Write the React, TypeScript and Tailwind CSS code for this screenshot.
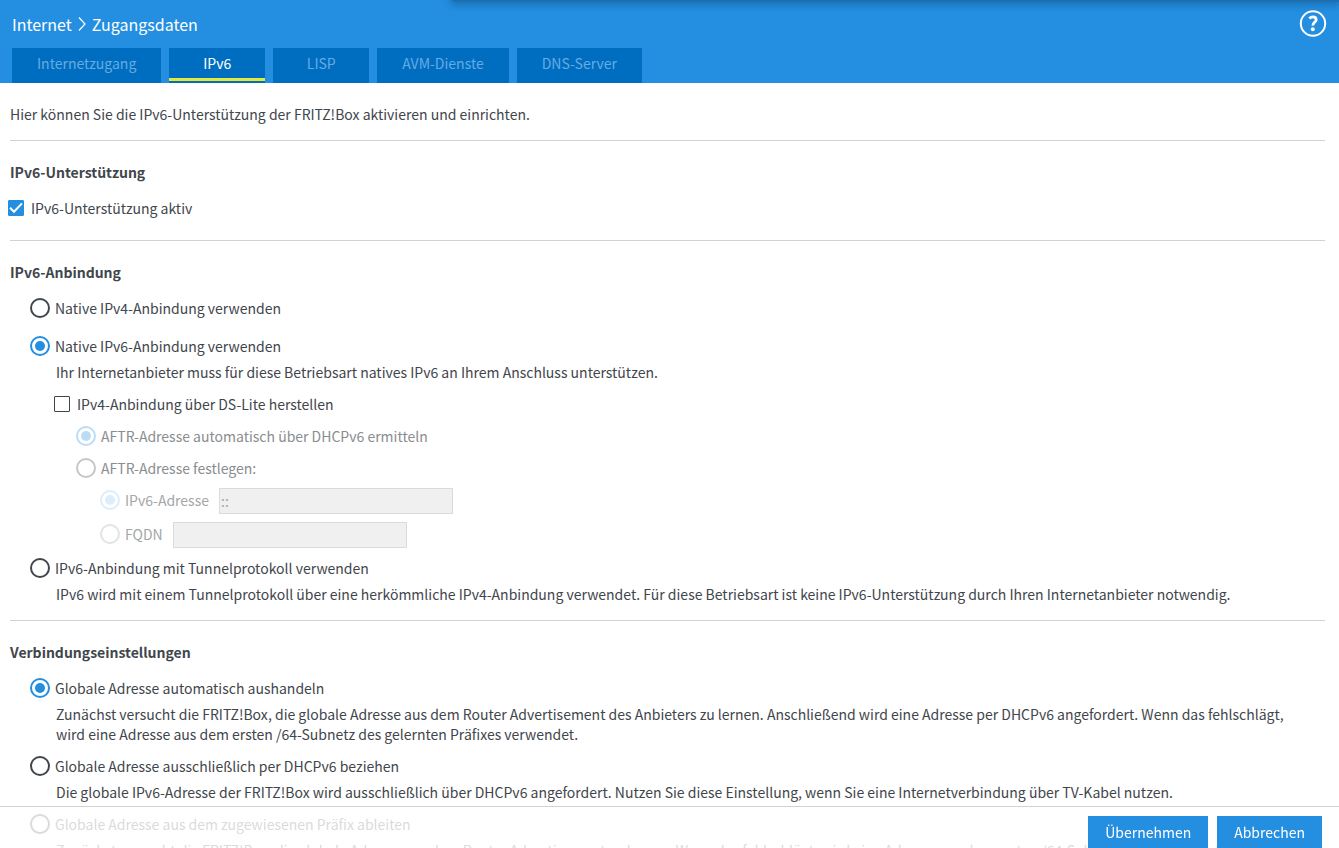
import { useState } from "react";
import type { ReactNode } from "react";

const TABS = ["Internetzugang", "IPv6", "LISP", "AVM-Dienste", "DNS-Server"];

type RadioProps = {
  name: string;
  label: string;
  checked: boolean;
  onSelect?: () => void;
  disabled?: boolean;
  faint?: boolean;
};

function Radio({ name, label, checked, onSelect, disabled, faint }: RadioProps) {
  const ring = checked ? "border-[#248ee0]" : "border-[#3f464c]";
  const fade = faint ? "opacity-15" : disabled ? "opacity-30" : "";
  const text = faint ? "text-[#a4a6a8]" : disabled ? "text-[#8a8d90]" : "";
  return (
    <label className="flex h-5 items-center gap-[5px]">
      <span className={`grid size-5 shrink-0 place-items-center ${fade}`}>
        <input
          type="radio"
          name={name}
          checked={checked}
          disabled={disabled}
          onChange={onSelect}
          className={`col-start-1 row-start-1 size-5 appearance-none rounded-full border-2 bg-white ${ring}`}
        />
        {checked && (
          <span className="pointer-events-none col-start-1 row-start-1 size-2.5 rounded-full bg-[#248ee0]" />
        )}
      </span>
      <span className={text}>{label}</span>
    </label>
  );
}

type CheckProps = { label: string; checked: boolean; onToggle: () => void };

function Checkbox({ label, checked, onToggle }: CheckProps) {
  const box = checked ? "border-[#248ee0] bg-[#248ee0]" : "border-[#3f464c] bg-white";
  return (
    <label className="flex h-5 items-center gap-[7px]">
      <span className="grid size-4 shrink-0 place-items-center">
        <input
          type="checkbox"
          checked={checked}
          onChange={onToggle}
          className={`col-start-1 row-start-1 size-4 appearance-none rounded-[1px] border ${box}`}
        />
        {checked && (
          <svg viewBox="0 0 16 16" className="pointer-events-none col-start-1 row-start-1 size-4" aria-hidden="true">
            <path d="M2 7.8 6 11.8 14 3.4" fill="none" stroke="#fff" strokeWidth="2" />
          </svg>
        )}
      </span>
      <span>{label}</span>
    </label>
  );
}

function Hint({ children }: { children: ReactNode }) {
  return <p className="mt-1.5 pr-3 pl-[26px]">{children}</p>;
}

function Section({ title, children }: { title: string; children: ReactNode }) {
  return (
    <section className="border-t border-[#d0d2d3] pt-[21px]">
      <h2 className="mb-4 font-bold">{title}</h2>
      {children}
    </section>
  );
}

export default function App() {
  const [tab, setTab] = useState("IPv6");
  const [active, setActive] = useState(true);
  const [dsLite, setDsLite] = useState(false);
  const [mode, setMode] = useState("native6");
  const [address, setAddress] = useState("auto");

  return (
    <div className="flex h-screen flex-col overflow-hidden bg-white font-['Noto_Sans_CJK_SC','Noto_Sans',sans-serif] text-[14px] leading-5 text-[#3f464c]">
      <header className="relative shrink-0 bg-[#248ee0] px-3 pt-2.5 text-white">
        <div className="absolute inset-x-0 top-0 h-3 overflow-hidden">
          <div className="-mt-2 ml-[453px] h-2.5 bg-[#1d6fb0] shadow-[0_0_8px_2px_rgba(0,40,80,0.35)]" />
        </div>
        <div className="flex items-start justify-between">
          <nav className="flex h-[38px] items-center gap-1.5 pb-2.5 text-[16px]" aria-label="Pfad">
            <a href="#internet">Internet</a>
            <svg viewBox="0 0 8 14" className="h-3.5 w-2" aria-hidden="true">
              <path d="M1 .5 7 7 1 13.5" fill="none" stroke="#fff" strokeWidth="1.2" />
            </svg>
            <a href="#zugangsdaten">Zugangsdaten</a>
          </nav>
          <button type="button" aria-label="Hilfe" className="size-7">
            <svg viewBox="0 0 28 28" className="size-7" aria-hidden="true">
              <circle cx="14" cy="13.5" r="12.2" fill="none" stroke="#fff" strokeWidth="2" />
              <path d="M10.4 8.6c.9-1.2 2-1.8 3.4-1.8 2.1 0 3.4 1.1 3.4 2.9 0 2.5-3.5 2.8-3.4 5.9" fill="none" stroke="#fff" strokeWidth="2.8" />
              <circle cx="13.8" cy="19.3" r="2" fill="#fff" />
            </svg>
          </button>
        </div>
        <nav className="flex gap-2" aria-label="Seiten">
          {TABS.map((name) => (
            <button
              key={name}
              type="button"
              onClick={() => setTab(name)}
              className={`flex h-[35px] min-w-24 flex-col items-center bg-[#006ec0] ${
                name === tab ? "text-white" : "text-[#66abe2]"
              }`}
            >
              <span className="flex h-[30px] items-center px-[25px]">{name}</span>
              {name === tab && <span className="h-[3px] w-full bg-[#e2e83c]" />}
            </button>
          ))}
        </nav>
      </header>

      <main className="min-h-0 flex-1 overflow-y-auto pr-3.5 pl-2.5 [scrollbar-width:none]">
        <p className="pt-[21px] pb-4">
          Hier können Sie die IPv6-Unterstützung der FRITZ!Box aktivieren und einrichten.
        </p>

        <Section title="IPv6-Unterstützung">
          <div className="-ml-0.5 pb-[22px]">
            <Checkbox label="IPv6-Unterstützung aktiv" checked={active} onToggle={() => setActive(!active)} />
          </div>
        </Section>

        <Section title="IPv6-Anbindung">
          <div className="pb-4 pl-5">
            <Radio name="mode" label="Native IPv4-Anbindung verwenden" checked={mode === "native4"} onSelect={() => setMode("native4")} />
            <div className="mt-[18px]">
              <Radio name="mode" label="Native IPv6-Anbindung verwenden" checked={mode === "native6"} onSelect={() => setMode("native6")} />
            </div>
            <Hint>Ihr Internetanbieter muss für diese Betriebsart natives IPv6 an Ihrem Anschluss unterstützen.</Hint>
            <div className="mt-3 flex flex-col gap-3 pl-6">
              <Checkbox label="IPv4-Anbindung über DS-Lite herstellen" checked={dsLite} onToggle={() => setDsLite(!dsLite)} />
              <div className="flex flex-col gap-3 pl-[22px]">
                <Radio name="aftr" label="AFTR-Adresse automatisch über DHCPv6 ermitteln" checked disabled />
                <Radio name="aftr" label="AFTR-Adresse festlegen:" checked={false} disabled />
              </div>
            </div>
            <div className="mt-2.5 flex flex-col gap-2 pl-[70px]">
              <div className="flex items-start gap-2.5">
                <div className="pt-0.5">
                  <Radio name="aftr-type" label="IPv6-Adresse" checked disabled faint />
                </div>
                <input
                  type="text"
                  aria-label="IPv6-Adresse"
                  disabled
                  defaultValue="::"
                  className="h-[26px] w-[234px] border border-[#d9dbdc] bg-[#f0f0f0] px-px text-[#a4a6a8]"
                />
              </div>
              <div className="flex items-start gap-2.5">
                <div className="pt-0.5">
                  <Radio name="aftr-type" label="FQDN" checked={false} disabled faint />
                </div>
                <input
                  type="text"
                  aria-label="FQDN"
                  disabled
                  className="h-[26px] w-[234px] border border-[#d9dbdc] bg-[#f0f0f0] px-px"
                />
              </div>
            </div>
            <div className="mt-2.5">
              <Radio name="mode" label="IPv6-Anbindung mit Tunnelprotokoll verwenden" checked={mode === "tunnel"} onSelect={() => setMode("tunnel")} />
            </div>
            <Hint>
              IPv6 wird mit einem Tunnelprotokoll über eine herkömmliche IPv4-Anbindung verwendet. Für diese Betriebsart ist keine IPv6-Unterstützung durch Ihren Internetanbieter notwendig.
            </Hint>
          </div>
        </Section>

        <Section title="Verbindungseinstellungen">
          <div className="flex flex-col gap-3 pb-14 pl-5">
            <div>
              <Radio name="address" label="Globale Adresse automatisch aushandeln" checked={address === "auto"} onSelect={() => setAddress("auto")} />
              <Hint>
                Zunächst versucht die FRITZ!Box, die globale Adresse aus dem Router Advertisement des Anbieters zu lernen. Anschließend wird eine Adresse per DHCPv6 angefordert. Wenn das fehlschlägt, wird eine Adresse aus dem ersten /64-Subnetz des gelernten Präfixes verwendet.
              </Hint>
            </div>
            <div>
              <Radio name="address" label="Globale Adresse ausschließlich per DHCPv6 beziehen" checked={address === "dhcp"} onSelect={() => setAddress("dhcp")} />
              <Hint>
                Die globale IPv6-Adresse der FRITZ!Box wird ausschließlich über DHCPv6 angefordert. Nutzen Sie diese Einstellung, wenn Sie eine Internetverbindung über TV-Kabel nutzen.
              </Hint>
            </div>
            <div>
              <Radio name="address" label="Globale Adresse aus dem zugewiesenen Präfix ableiten" checked={address === "prefix"} onSelect={() => setAddress("prefix")} />
              <Hint>
                Zunächst versucht die FRITZ!Box, die globale Adresse aus dem Router Advertisement zu lernen. Wenn das fehlschlägt, wird eine Adresse aus dem ersten /64-Subnetz des gelernten Präfixes verwendet.
              </Hint>
            </div>
          </div>
        </Section>
      </main>

      <footer className="fixed inset-x-0 bottom-0 flex h-[42px] items-start justify-end gap-[9px] overflow-hidden border-t border-[#d0d2d3] bg-white/80 pt-[9px] pr-[17px]">
        <button type="button" className="h-[34px] shrink-0 bg-[#248ee0] px-[17px] pb-0.5 text-white">Übernehmen</button>
        <button type="button" className="h-[34px] shrink-0 bg-[#248ee0] px-[17px] pb-0.5 text-white">Abbrechen</button>
      </footer>
    </div>
  );
}
